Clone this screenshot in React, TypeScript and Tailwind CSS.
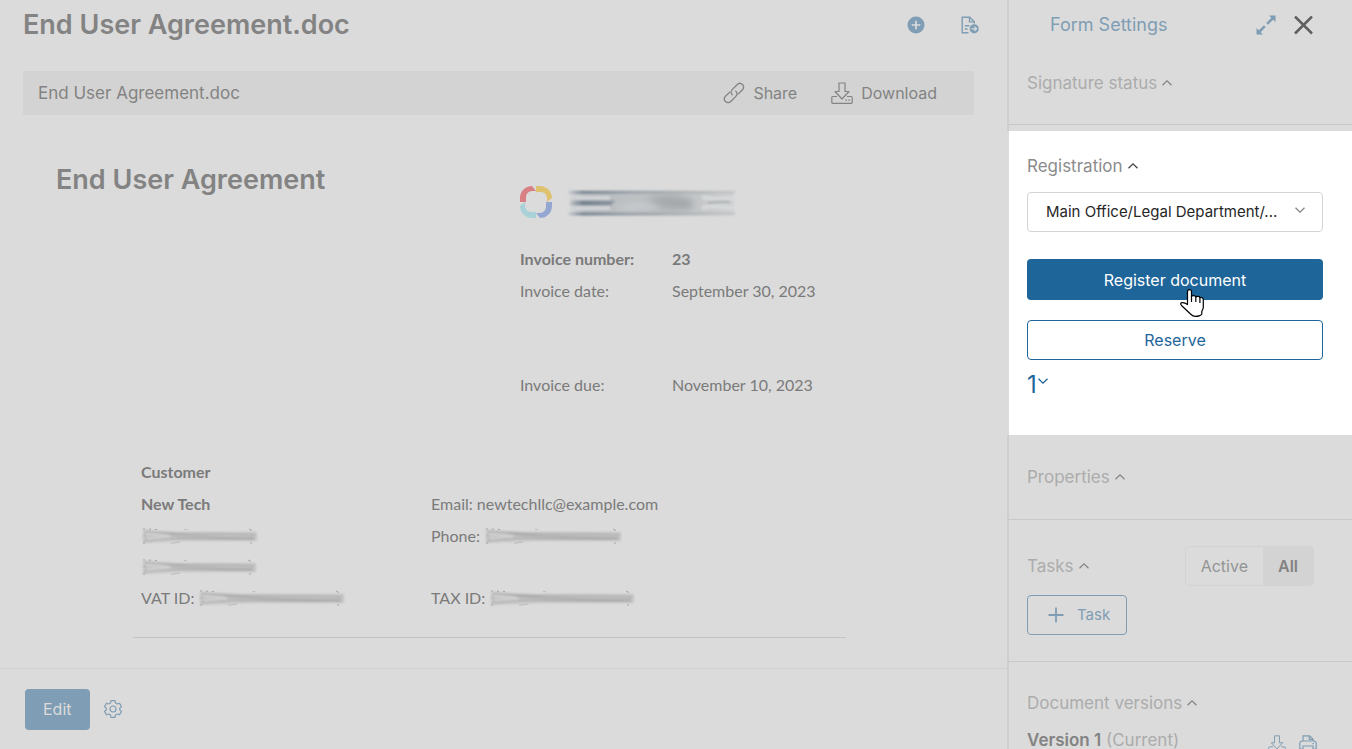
import React, { useState } from "react";

const ui = "font-[Inter,'Liberation_Sans',sans-serif]";

function Chevron({ up = false, className = "" }: { up?: boolean; className?: string }) {
  return (
    <svg width="12" height="8" viewBox="0 0 12 8" fill="none" stroke="currentColor" strokeWidth="1.3" className={className} aria-hidden="true">
      <path d={up ? "M1.5 6.3 6 1.8l4.5 4.5" : "M1.5 1.7 6 6.2l4.5-4.5"} />
    </svg>
  );
}

function DownloadIcon({ size }: { size: number }) {
  return (
    <svg width={size} height={size} viewBox="0 0 22 22" fill="none" stroke="currentColor" strokeWidth="1.2" strokeLinejoin="round" aria-hidden="true">
      <path d="M8 1h6v8.500h4L11 17 4 9.500h4z" />
      <path d="M6 14.500H1.800a1 1 0 0 0-1 1v5a.8.8 0 0 0 .8.800h18.800a.8.8 0 0 0 .8-.8v-5a1 1 0 0 0-1-1H16" />
      <path d="M14.500 18.200h1.500M17.300 18.200h1.500" />
    </svg>
  );
}

function ShareIcon() {
  return (
    <svg width="22" height="22" viewBox="0 0 22 22" fill="none" stroke="currentColor" strokeWidth="1.3" strokeLinecap="round" aria-hidden="true">
      <path d="M9.200 12.800C7.600 11.200 7.800 9 9.400 7.400l4.900-4.900c1.500-1.500 3.700-1.500 5.200 0s1.500 3.700 0 5.200l-4.200 4.200" />
      <path d="M12.700 9.100c1.600 1.600 1.500 3.900-.1 5.500l-4.900 4.900c-1.500 1.500-3.700 1.500-5.200 0s-1.500-3.700 0-5.200l4.200-4.200" />
    </svg>
  );
}

function AddIcon() {
  return (
    <svg width="18" height="18" viewBox="0 0 18 18" aria-hidden="true">
      <circle cx="9" cy="9" r="8.500" fill="currentColor" />
      <path d="M9 4.700v8.600M4.700 9h8.600" stroke="#dbdbdb" strokeWidth="1.700" />
    </svg>
  );
}

function DocExportIcon() {
  return (
    <svg width="18" height="18" viewBox="0 0 18 18" fill="none" stroke="currentColor" strokeWidth="1.400" aria-hidden="true">
      <path d="M7.500 16.800H1.200V1.200h7.500l4.600 4.500v1.800" />
      <path d="M8.500 1.200v4.700h4.800M3.800 9.700h4.600M3.800 13h2.800" />
      <circle cx="13.200" cy="12.800" r="4.600" fill="currentColor" stroke="none" />
      <path d="M10.500 12.800h5M13.500 10.700l2.100 2.100-2.100 2.100" stroke="#dbdbdb" strokeWidth="1.200" />
    </svg>
  );
}

function ExpandIcon() {
  return (
    <svg width="20" height="20" viewBox="0 0 20 20" aria-hidden="true">
      <path d="M13 .5h6.500V7l-2.300-2.300-.6.600-1.900-1.900.6-.6zM7 19.500H.5V13l2.300 2.300.6-.6 1.900 1.900-.6.600z" fill="currentColor" />
      <path d="M17 3l-5.800 5.800M3 17l5.800-5.800" stroke="currentColor" strokeWidth="2.500" />
    </svg>
  );
}

function GearIcon() {
  return (
    <svg width="18" height="18" viewBox="0 0 18 18" fill="none" stroke="currentColor" strokeWidth="1.200" strokeLinejoin="round" aria-hidden="true">
      <path d="M7 .7h4l.6 2.400 1.500.9 2.400-.8 2 3.400L15.700 8.200v1.600l1.800 1.600-2 3.400-2.400-.8-1.500.9-.6 2.400H7l-.6-2.400-1.500-.9-2.400.8-2-3.400 1.800-1.600V8.200L.5 6.600l2-3.400 2.400.8 1.500-.9z" />
      <circle cx="9" cy="9" r="3" />
    </svg>
  );
}

function PrinterIcon() {
  return (
    <svg width="18" height="18" viewBox="0 0 18 18" fill="none" stroke="currentColor" strokeWidth="1.200" aria-hidden="true">
      <path d="M4 6V.8h6.500L14 4v2M10.300.8v3.500H14M4 14H1.800a1 1 0 0 1-1-1V8.500A2.500 2.500 0 0 1 3.300 6h11.400a2.500 2.500 0 0 1 2.500 2.500V13a1 1 0 0 1-1 1H14M4 11h10v6H4z" />
      <path d="M13.500 8.600h1.500" />
    </svg>
  );
}

function LogoRing() {
  return (
    <svg width="32" height="32" viewBox="0 0 32 32" aria-hidden="true">
      <path d="M0 16V12A12 12 0 0 1 12 0l4 5h-4a6 6 0 0 0-6 6v5z" fill="#d98084" />
      <path d="M16 0h4a12 12 0 0 1 12 12l-5 4v-4a6 6 0 0 0-6-6h-5z" fill="#dfc270" />
      <path d="M32 16v4a12 12 0 0 1-12 12l-4-5h4a6 6 0 0 0 6-6v-5z" fill="#94a6d2" />
      <path d="M16 32h-4A12 12 0 0 1 0 20l5-4v4a6 6 0 0 0 6 6h5z" fill="#a8d1d8" />
    </svg>
  );
}

function NameSmudge() {
  return (
    <svg width="172" height="32" viewBox="0 0 172 32" aria-hidden="true">
      <defs>
        <linearGradient id="ink" x1="0" x2="172" gradientUnits="userSpaceOnUse">
          <stop offset="0" stopColor="#7b8794" stopOpacity="0" />
          <stop offset=".1" stopColor="#75828f" />
          <stop offset=".28" stopColor="#8d969f" />
          <stop offset=".6" stopColor="#a9adb1" />
          <stop offset="1" stopColor="#c6c9cc" />
        </linearGradient>
        <linearGradient id="wash" x1="0" x2="1">
          <stop offset="0" stopColor="#b6bcc1" stopOpacity="0" />
          <stop offset=".1" stopColor="#b9bec3" />
          <stop offset=".6" stopColor="#b9bcbe" />
          <stop offset="1" stopColor="#cfd1d2" />
        </linearGradient>
        <filter id="soft" x="-10%" y="-30%" width="120%" height="160%">
          <feGaussianBlur stdDeviation="1.200" />
        </filter>
        <filter id="softer" x="-20%" y="-60%" width="140%" height="220%">
          <feGaussianBlur stdDeviation="3" />
        </filter>
      </defs>
      <g filter="url(#soft)">
        <rect x="2" y="5" width="166" height="24" fill="url(#wash)" />
        <path d="M2 6.300h166v.1M2 28h166v.1" stroke="url(#ink)" strokeWidth="3" />
        <path d="M4 17h42v.1" stroke="url(#ink)" strokeWidth="5" />
        <path d="M10 12h34M10 22h34" stroke="#d3d6d8" strokeWidth="3.500" />
        <path d="M136 11c9 3 18 2 32 1M136 22c9-3 18-1 32 0" stroke="#d6d8d9" strokeWidth="4" fill="none" />
        <path d="M142 17c9-2 15-1 22-1" stroke="#a9aeb2" strokeWidth="2" fill="none" />
      </g>
      <g filter="url(#softer)">
        <path d="M46 21c30-4 40-4 50-1-20 4-40 4-50 1zM46 11c20-3 36-2 48-1" fill="#cfd2d4" />
        <path d="M80 15c12-6 30-6 44-1 6 4 4 7-4 9-14 0-26-2-40-8z" fill="#a4a8ab" />
      </g>
    </svg>
  );
}

function Scribble({ w }: { w: number }) {
  return (
    <svg width={w} height="18" viewBox={`0 0 ${w} 18`} fill="none" aria-hidden="true" className="shrink-0">
      <defs>
        <filter id={`s${w}`} x="-5%" y="-20%" width="110%" height="140%">
          <feGaussianBlur stdDeviation="0.8" />
        </filter>
      </defs>
      <g filter={`url(#s${w})`}>
        <path d={`M2 3L${w * 0.3} 5H${w - 1}V14H${w * 0.35}L2 16z`} fill="#c4c4c4" />
        <path d={`M2 9C20 4 30 10 ${w - 4} 11M4 4C40 9 60 5 ${w - 3} 8M3 14C30 9 50 12 ${w - 4} 12`} stroke="#a6a6a6" strokeWidth="1.200" />
        <path d="M5 8C14 6 22 8 30 9M6 12c9-1 15-2 22-2" stroke="#d8d8d8" strokeWidth="1.500" />
      </g>
      <path d={`M2 2h2M8 2.200h2M14 2.500h2M2 16h2M${w - 9} 2l3 1.500M${w - 8} 16h2`} stroke="#a6a6a6" />
      <path d={`M30 16.300l9-1.300M${w * 0.37} 2.300l3 .5`} stroke="#bcbcbc" />
    </svg>
  );
}

function HandCursor() {
  return (
    <svg width="25" height="29" viewBox="0 0 25 29" className="pointer-events-none absolute left-[calc(50%+5px)] top-[30px]" aria-hidden="true">
      <path
        d="M7.500 15V2.500C7.500 1 8.500.6 9.500.6s2 .6 2 2V7.500c0-1 4-1.500 4.500.5 1-1 3.500-.7 4 .8 1.300-.8 3.300 0 3.300 2V18c0 2-.8 3-1.500 4.500V25c0 1-3.300 2.400-6.300 2.400-2.500 0-3.500-.9-5-2.400L1.500 16.500C.3 15 .4 14 2 13.700c2-.2 3.500.3 5.500 1.800z"
        fill="#fff" stroke="#000" strokeWidth="1.200" strokeLinejoin="round"
      />
      <path d="M11.500 7v6M15.800 8v5M19.900 9v5" stroke="#000" strokeWidth="1.200" />
    </svg>
  );
}

function SectionTitle({ children, lit = false }: { children: React.ReactNode; lit?: boolean }) {
  return (
    <button type="button" className={`flex items-center gap-1 text-[17px] leading-6 ${lit ? "text-[#8c8c8c]" : "text-[#acacac]"}`}>
      {children}
      <Chevron up className={lit ? "text-[#444]" : "text-[#858585]"} />
    </button>
  );
}

export default function App() {
  const [filter, setFilter] = useState("All");
  return (
    <div className={`flex h-screen overflow-hidden bg-[#dbdbdb] text-[#838383] ${ui}`}>
      <main className="flex min-w-0 flex-1 flex-col">
        <header className="flex h-[71px] shrink-0 items-start justify-between pl-[23px] pr-7">
          <h1 className="pt-[7px] text-[27px] font-semibold leading-9">End User Agreement.doc</h1>
          <div className="flex gap-9 pt-4 text-[#7f9db4]">
            <button type="button" aria-label="Add"><AddIcon /></button>
            <button type="button" aria-label="Export document"><DocExportIcon /></button>
          </div>
        </header>

        <div className="ml-[23px] mr-[33px] flex h-11 shrink-0 items-center justify-between bg-[#d3d3d3] pl-[15px] pr-[37px]">
          <span className="text-[17px] leading-6">End User Agreement.doc</span>
          <div className="flex gap-[34px] text-[16px] leading-6">
            <button type="button" className="flex items-center gap-2"><ShareIcon />Share</button>
            <button type="button" className="flex items-center gap-2"><DownloadIcon size={22} />Download</button>
          </div>
        </div>

        <article className="min-h-0 flex-1 overflow-hidden pl-14 font-[Lato,'Noto_Sans',sans-serif] text-[16px] text-[#7a7a7a]">
          <h2 className={`pt-[47px] text-[27px] font-semibold leading-9 text-[#838383] ${ui}`}>End User Agreement</h2>
          <div className="-mt-3 ml-[464px]">
            <div className="flex items-center gap-[14px]">
              <LogoRing />
              <NameSmudge />
            </div>
            <dl className="grid grid-cols-[152px_1fr] pt-[25px] leading-8">
              <dt className="font-bold">Invoice number:</dt>
              <dd className="font-bold">23</dd>
              <dt>Invoice date:</dt>
              <dd>September 30, 2023</dd>
              <dt className="pt-[62px]">Invoice due:</dt>
              <dd className="pt-[62px]">November 10, 2023</dd>
            </dl>
          </div>
          <section className="ml-[77px] mt-[55px] w-[713px] border-b border-[#c4c4c4] pb-6 pl-2">
            <div className="grid grid-cols-[290px_1fr] leading-8">
              <h3 className="col-span-2 font-bold">Customer</h3>
              <p className="font-bold">New Tech</p>
              <p>Email: newtechllc@example.com</p>
            </div>
            <div className="grid grid-cols-[290px_1fr] leading-[31px]">
              <p className="flex items-center"><Scribble w={117} /></p>
              <p className="flex items-center gap-1">Phone: <Scribble w={138} /></p>
              <p className="col-span-2 flex h-[31px] items-center"><Scribble w={116} /></p>
              <p className="flex items-center gap-1">VAT ID: <Scribble w={147} /></p>
              <p className="flex items-center gap-1">TAX ID: <Scribble w={146} /></p>
            </div>
          </section>
        </article>

        <footer className="flex h-[81px] shrink-0 items-center gap-[14px] border-t border-[#cfcfcf] pl-[25px]">
          <button type="button" className="h-[41px] rounded bg-[#7f9db4] px-[18px] text-[16px] text-[#dbdbdb]">Edit</button>
          <button type="button" aria-label="Settings" className="text-[#7f9db4]"><GearIcon /></button>
        </footer>
      </main>

      <aside className="flex w-[345px] shrink-0 flex-col *:border-l-2 *:border-l-[#cfcfcf]">
        <header className="flex h-[50px] shrink-0 items-center pl-[41px] pr-[39px] text-[#7f9db4]">
          <h2 className="flex-1 text-[18px] leading-6">Form Settings</h2>
          <button type="button" aria-label="Expand"><ExpandIcon /></button>
          <button type="button" aria-label="Close" className="ml-[18px] text-[#5f5f5f]">
            <svg width="19" height="19" viewBox="0 0 19 19" stroke="currentColor" strokeWidth="2.500" aria-hidden="true">
              <path d="M1 .5l17 17M18 .5l-17 17" />
            </svg>
          </button>
        </header>

        <section className="h-[81px] shrink-0">
          <div className="h-[75px] border-b border-[#c8c8c8] pl-[18px] pt-[21px]">
            <SectionTitle>Signature status</SectionTitle>
          </div>
        </section>

        <section className="h-[304px] shrink-0 border-l-[#dbdbdb]! bg-white pl-[18px] pr-[29px] pt-[23px]">
          <SectionTitle lit>Registration</SectionTitle>
          <div className="relative mt-[14px]">
            <select aria-label="Registration place" className="block h-10 w-full appearance-none rounded border border-[#d4d4d4] bg-white pl-[18px] pr-9 text-[15px] text-[#262626]">
              <option>Main Office/Legal Department/...</option>
            </select>
            <Chevron className="pointer-events-none absolute right-[17px] top-[14px] text-[#858585]" />
          </div>
          <div className="relative mt-[27px]">
            <button type="button" className="h-[41px] w-full rounded bg-[#1e6599] text-[16px] text-white">Register document</button>
            <HandCursor />
          </div>
          <button type="button" className="mt-5 block h-10 w-full rounded border border-[#1e6599] text-[16px] text-[#1e6599]">Reserve</button>
          <button type="button" className="mt-[11px] flex text-[24px] leading-7 text-[#1e6599]">
            1<Chevron className="mt-[6px]" />
          </button>
        </section>

        <section className="h-[85px] shrink-0 border-b border-[#c8c8c8] pl-[18px] pt-[30px]">
          <SectionTitle>Properties</SectionTitle>
        </section>

        <section className="h-[142px] shrink-0 border-b border-[#c8c8c8] pl-[18px] pr-[38px] pt-[26px]">
          <div className="flex items-center justify-between">
            <SectionTitle>Tasks</SectionTitle>
            <div className="flex h-10 overflow-hidden rounded border border-[#d2d2d2] text-[16px]">
              {["Active", "All"].map((name) => (
                <button
                  key={name}
                  type="button"
                  aria-pressed={filter === name}
                  onClick={() => setFilter(name)}
                  className={filter === name ? "bg-[#d3d3d3] px-[15px] font-semibold text-[#838383]" : "px-[15px] text-[#949494]"}
                >
                  {name}
                </button>
              ))}
            </div>
          </div>
          <button type="button" className="mt-[9px] flex h-10 w-[100px] items-center gap-[13px] rounded border border-[#7f9db4] pl-5 text-[15px] text-[#7f9db4]">
            <svg width="16" height="16" viewBox="0 0 16 16" stroke="currentColor" strokeWidth="1.800" aria-hidden="true">
              <path d="M8 .5v15M.5 8h15" />
            </svg>
            Task
          </button>
        </section>

        <section className="min-h-0 flex-1 overflow-hidden pl-[18px] pr-[35px] pt-[29px]">
          <SectionTitle>Document versions</SectionTitle>
          <div className="mt-[13px] flex items-start text-[17px] leading-6">
            <p className="flex-1 text-[#acacac]"><strong className="font-semibold text-[#838383]">Version 1</strong> (Current)</p>
            <div className="flex gap-[13px] pt-[7px] text-[#7f9db4]">
              <button type="button" aria-label="Download version"><DownloadIcon size={18} /></button>
              <button type="button" aria-label="Print version"><PrinterIcon /></button>
            </div>
          </div>
        </section>
      </aside>
    </div>
  );
}
